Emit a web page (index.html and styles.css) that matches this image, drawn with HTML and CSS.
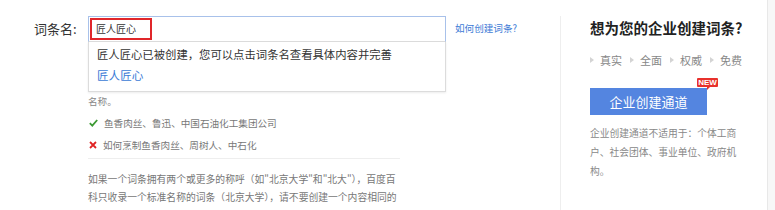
FILE: index.html
```html
<!DOCTYPE html>
<html lang="zh-CN">
<head>
<meta charset="utf-8">
<title>创建词条</title>
<link rel="stylesheet" href="styles.css">
</head>
<body>
<div class="page">
  <div class="main">
    <div class="row">
      <div class="label">词条名:</div>
      <div class="combo">
        <div class="input"><span class="value">匠人匠心</span></div>
        <div class="dropdown">
          <div class="dd-msg">匠人匠心已被创建，您可以点击词条名查看具体内容并完善</div>
          <a class="dd-link" href="#">匠人匠心</a>
        </div>
      </div>
      <a class="help" href="#">如何创建词条?</a>
    </div>
    <div class="hint">
      <p class="hint-tail">名称。</p>
      <ul class="examples">
        <li class="ok"><svg class="ico" width="9" height="8" viewBox="0 0 9 8"><path d="M0.8 4.2 L3.3 6.6 L8.2 1" fill="none" stroke="#3d9a34" stroke-width="1.8"/></svg><span>鱼香肉丝、鲁迅、中国石油化工集团公司</span></li>
        <li class="bad"><svg class="ico" width="8" height="8" viewBox="0 0 8 8"><path d="M1 1 L7 7 M7 1 L1 7" fill="none" stroke="#e02424" stroke-width="1.8"/></svg><span>如何烹制鱼香肉丝、周树人、中石化</span></li>
      </ul>
      <p class="para">如果一个词条拥有两个或更多的称呼（如"北京大学"和"北大"），百度百<br>科只收录一个标准名称的词条（北京大学），请不要创建一个内容相同的<br>新词条（北大），而是<a href="#">报告同义词</a>。</p>
    </div>
  </div>
  <div class="side">
    <h2 class="title">想为您的企业创建词条?</h2>
    <ul class="perks">
      <li>真实</li>
      <li>全面</li>
      <li>权威</li>
      <li>免费</li>
    </ul>
    <div class="btn-wrap">
      <a class="btn" href="#">企业创建通道</a>
      <span class="badge">NEW</span>
    </div>
    <p class="desc">企业创建通道不适用于：个体工商户、社会团体、事业单位、政府机构。</p>
  </div>
</div>
</body>
</html>
```
FILE: styles.css
```css
html, body {
  margin: 0;
  padding: 0;
}
body {
  background: #f7f7f7;
  font-family: "Noto Sans CJK SC", "Noto Sans", sans-serif;
  color: #333;
}
a { text-decoration: none; }
p, ul, h2 { margin: 0; padding: 0; }
ul { list-style: none; }

.page {
  display: flex;
  width: 767px;
  height: 210px;
  background: #fff;
  border-right: 1px solid #e8e8e8;
  overflow: hidden;
}

.main {
  width: 560px;
  flex: none;
  box-sizing: border-box;
  padding: 16px 0 0 34px;
}

.row {
  display: flex;
  align-items: flex-start;
}
.label {
  width: 54px;
  flex: none;
  font-size: 13px;
  line-height: 26px;
  color: #333;
}
.combo {
  position: relative;
  width: 358px;
  flex: none;
}
.input {
  height: 26px;
  box-sizing: border-box;
  border: 1px solid #a8c1ea;
  border-bottom-color: #dcdcdc;
  padding: 1px 0 0 1px;
}
.value {
  display: block;
  box-sizing: border-box;
  width: 62px;
  height: 22px;
  border: 2px solid #e0262a;
  padding-left: 4px;
  font-size: 10px;
  line-height: 18px;
  color: #333;
}
.dropdown {
  position: absolute;
  left: 0;
  top: 26px;
  width: 358px;
  height: 50px;
  box-sizing: border-box;
  background: #fff;
  border: 1px solid #dcdcdc;
  border-top: none;
  box-shadow: 0 1px 2px rgba(0, 0, 0, 0.08);
  padding: 2px 0 0 8px;
  z-index: 2;
}
.dd-msg {
  font-size: 11.35px;
  line-height: 21px;
  color: #333;
}
.dd-link {
  display: block;
  font-size: 11.6px;
  line-height: 21px;
  color: #3b7bd6;
}
.help {
  margin-left: 9px;
  font-size: 9.6px;
  line-height: 25px;
  color: #3d7bd6;
}

.hint {
  width: 312px;
  margin: 48px 0 0 54px;
  font-size: 9.6px;
  color: #777;
}
.hint-tail {
  line-height: 22px;
  color: #888;
}
.examples li {
  display: flex;
  align-items: center;
  line-height: 22px;
  color: #777;
}
.ico {
  flex: none;
  margin-left: 1px;
  margin-right: 6px;
}
.para {
  margin-top: 2px;
  border-top: 1px solid #eee;
  padding-top: 11px;
  font-size: 9.8px;
  line-height: 18px;
  white-space: nowrap;
  color: #777;
}
.para a { color: #3d7bd6; }

.side {
  flex: none;
  width: 177px;
  margin-top: 16px;
  border-left: 1px solid #eeeeee;
  padding-left: 29px;
}
.title {
  font-size: 14.5px;
  line-height: 24px;
  font-weight: bold;
  color: #222;
  white-space: nowrap;
}
.perks {
  display: flex;
  margin-top: 10px;
  font-size: 11px;
  line-height: 20px;
  color: #888;
}
.perks li {
  display: flex;
  align-items: center;
  margin-right: 8px;
}
.perks li::before {
  content: "";
  width: 0;
  height: 0;
  border-left: 4px solid #d4d4d4;
  border-top: 3px solid transparent;
  border-bottom: 3px solid transparent;
  margin-right: 6px;
}
.btn-wrap {
  position: relative;
  margin-top: 18px;
  width: 117px;
}
.btn {
  display: block;
  width: 117px;
  height: 27px;
  background: #5485e0;
  color: #fff;
  font-size: 13px;
  line-height: 27px;
  text-align: center;
}
.badge {
  position: absolute;
  left: 107px;
  top: -10px;
  width: 21px;
  height: 9px;
  background: #e8312c;
  color: #fff;
  font-family: "Liberation Sans", Arial, sans-serif;
  font-size: 8px;
  font-weight: bold;
  line-height: 9px;
  text-align: center;
  border-radius: 1px;
}
.badge::after {
  content: "";
  position: absolute;
  left: 10px;
  top: 9px;
  border-top: 3px solid #e8312c;
  border-right: 3px solid transparent;
}
.desc {
  margin-top: 9px;
  width: 150px;
  font-size: 9.75px;
  line-height: 19px;
  color: #888;
}
```
